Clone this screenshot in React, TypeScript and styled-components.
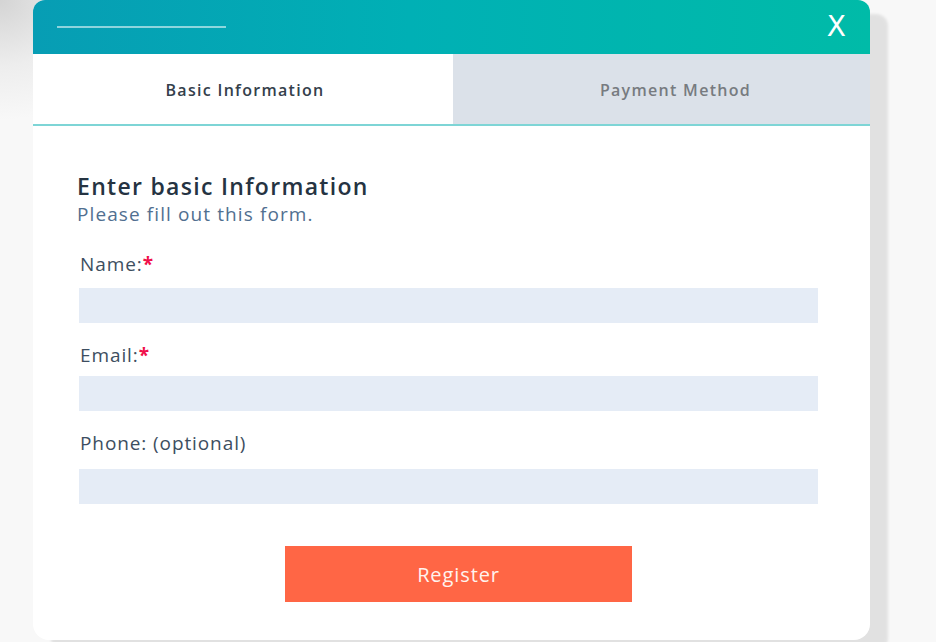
import React from 'react';
import styled, { createGlobalStyle } from 'styled-components';

const GlobalStyle = createGlobalStyle`
  html, body {
    margin: 0;
    padding: 0;
    height: 100%;
  }
  body {
    background:
      radial-gradient(ellipse 140px 120px at 0 0, #d4d4d4 0%, rgba(230, 230, 230, 0.6) 55%, rgba(248, 248, 248, 0) 100%),
      #f8f8f8;
    font-family: "Open Sans", Lato, sans-serif;
    overflow: hidden;
  }
`;

const Page = styled.div`
  width: 936px;
  height: 642px;
  padding-left: 33px;
  box-sizing: border-box;
`;

const Card = styled.div`
  width: 837px;
  height: 640px;
  display: flex;
  flex-direction: column;
  background: #fff;
  border-radius: 12px 12px 16px 16px;
  box-shadow: 18px 14px 3px rgba(0, 0, 0, 0.09);
  overflow: hidden;
`;

const Header = styled.div`
  height: 54px;
  flex-shrink: 0;
  display: flex;
  align-items: center;
  justify-content: space-between;
  padding: 0 24px 0 24px;
  background: linear-gradient(90deg, #079db4 0%, #00b0b5 45%, #00bba8 100%);
`;

const HeaderLine = styled.div`
  width: 169px;
  height: 2px;
  background: rgba(255, 255, 255, 0.55);
`;

const CloseButton = styled.button`
  border: 0;
  padding: 0;
  background: none;
  color: #fff;
  font-family: "DejaVu Sans", sans-serif;
  font-weight: 400;
  font-size: 28px;
  line-height: 1;
  cursor: pointer;
`;

const Tabs = styled.div`
  display: flex;
  height: 70px;
  flex-shrink: 0;
  border-bottom: 2px solid #7ed5d6;
`;

const Tab = styled.div<{ $active?: boolean }>`
  flex: ${p => (p.$active ? '0 0 420px' : '1')};
  display: flex;
  align-items: center;
  justify-content: center;
  padding-top: 2px;
  padding-left: ${p => (p.$active ? '4px' : '28px')};
  box-sizing: border-box;
  background: ${p => (p.$active ? '#fff' : '#dbe1e9')};
  color: ${p => (p.$active ? '#34404b' : '#777b80')};
  font-size: 16px;
  font-weight: 600;
  letter-spacing: 1.3px;
`;

const Body = styled.div`
  flex: 1;
  display: flex;
  flex-direction: column;
  padding: 46px 52px 0 44px;
`;

const Title = styled.h2`
  margin: 0;
  color: #253342;
  font-size: 23px;
  line-height: 28px;
  font-weight: 600;
  letter-spacing: 1.3px;
`;

const Subtitle = styled.p`
  margin: 2px 0 0;
  color: #516f90;
  font-size: 19px;
  line-height: 24px;
  letter-spacing: 1.1px;
`;

const Field = styled.div<{ $gap: number }>`
  display: flex;
  flex-direction: column;
  padding-left: 2px;
  margin-top: ${p => p.$gap}px;
`;

const Label = styled.label<{ $space: number }>`
  display: block;
  padding-left: 1px;
  margin-bottom: ${p => p.$space}px;
  color: #3d4e60;
  font-size: 19px;
  line-height: 22px;
  letter-spacing: 0.9px;
`;

const Required = styled.span`
  color: #f0104a;
  font-weight: 700;
`;

const Input = styled.input`
  display: block;
  width: 739px;
  height: 35px;
  box-sizing: border-box;
  border: 0;
  padding: 0 10px;
  background: #e5ecf6;
  font-family: "Open Sans", sans-serif;
  font-size: 16px;
  outline: none;
`;

const Actions = styled.div`
  display: flex;
  padding-left: 208px;
  margin-top: 42px;
`;

const RegisterButton = styled.button`
  width: 347px;
  height: 56px;
  border: 0;
  background: #ff6645;
  color: #fff3ee;
  font-family: "Open Sans", sans-serif;
  font-size: 20px;
  letter-spacing: 0.9px;
  cursor: pointer;
`;

export default function App() {
  return (
    <>
      <GlobalStyle />
      <Page>
        <Card>
          <Header>
            <HeaderLine />
            <CloseButton>X</CloseButton>
          </Header>
          <Tabs>
            <Tab $active>Basic Information</Tab>
            <Tab>Payment Method</Tab>
          </Tabs>
          <Body>
            <Title>Enter basic Information</Title>
            <Subtitle>Please fill out this form.</Subtitle>

            <Field $gap={27}>
              <Label $space={13}>
                Name:<Required>*</Required>
              </Label>
              <Input />
            </Field>

            <Field $gap={21}>
              <Label $space={10}>
                Email:<Required>*</Required>
              </Label>
              <Input />
            </Field>

            <Field $gap={21}>
              <Label $space={15}>Phone: (optional)</Label>
              <Input />
            </Field>

            <Actions>
              <RegisterButton>Register</RegisterButton>
            </Actions>
          </Body>
        </Card>
      </Page>
    </>
  );
}
